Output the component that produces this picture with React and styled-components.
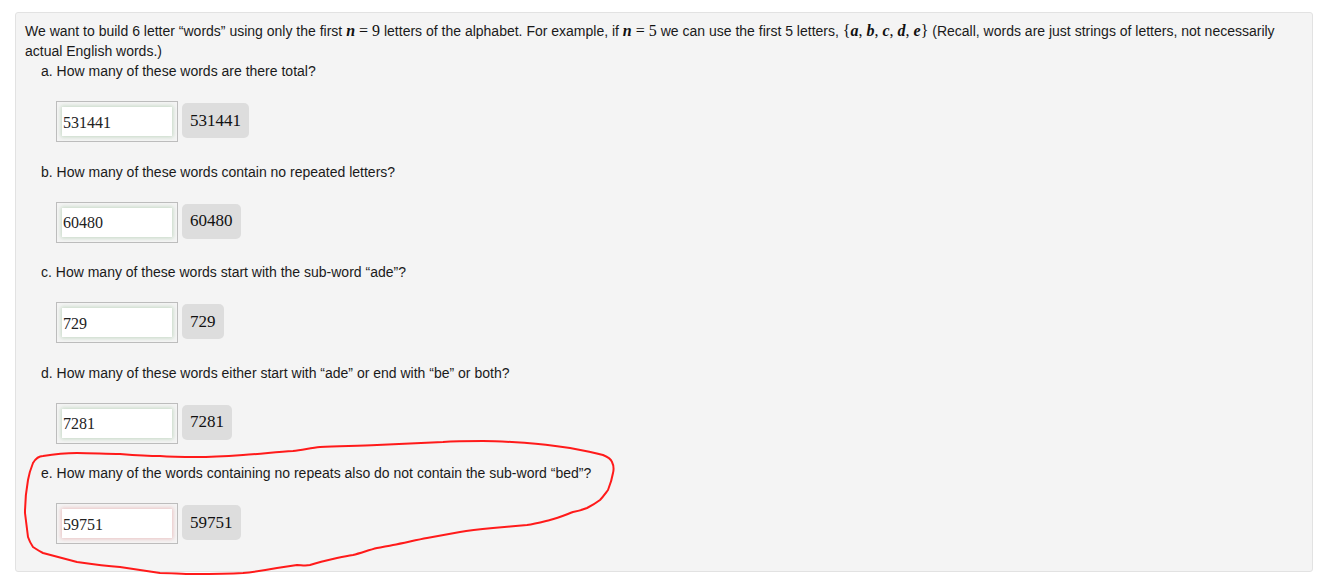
import React from "react";
import styled, { createGlobalStyle } from "styled-components";

const GlobalStyle = createGlobalStyle`
  html, body { margin: 0; padding: 0; background: #ffffff; }
  body { font-family: "Liberation Sans", Arial, sans-serif; }
`;

const Page = styled.div`
  position: relative;
  padding: 12px 11px 13px 15px;
`;

const Card = styled.div`
  background: #f4f4f4;
  border: 1px solid #e2e2e2;
  border-radius: 3px;
  padding: 8px 9px 7px 9px;
  font-family: "Liberation Sans", Arial, sans-serif;
  font-size: 14px;
  line-height: 20px;
  color: #1a1a1a;
`;

const Intro = styled.p`
  margin: 0;
`;

const MathVar = styled.span`
  font-family: "Liberation Serif", "Times New Roman", serif;
  font-style: italic;
  font-weight: bold;
  font-size: 16px;
  line-height: 1;
  color: #111;
`;

const MathText = styled.span`
  font-family: "Liberation Serif", "Times New Roman", serif;
  font-size: 16px;
  line-height: 1;
  color: #111;
  margin: 0 ${(p) => (p.$op ? "4px" : "0")};
`;

const Parts = styled.div`
  margin: 0;
`;

const Part = styled.div`
  padding-left: 16px;
`;

const Label = styled.div`
  line-height: 20px;
`;

const AnswerRow = styled.div`
  display: flex;
  align-items: flex-start;
  margin: 20px 0 19.5px 15px;
`;

const AnswerBox = styled.div`
  border: 1px solid #bdbdbd;
  padding: 5px;
  background: #f4f4f4;
`;

const AnswerInput = styled.input`
  display: block;
  box-sizing: border-box;
  width: 110px;
  height: 29px;
  border: none;
  outline: none;
  background: #ffffff;
  padding: 2px 1px 0 1px;
  font-family: "Liberation Serif", "Times New Roman", serif;
  font-size: 16px;
  color: #222;
  box-shadow: ${(p) =>
    p.$state === "wrong"
      ? "0 0 4px 1px rgba(214, 90, 90, 0.32)"
      : "0 0 4px 1px rgba(96, 160, 96, 0.32)"};
`;

const Preview = styled.div`
  margin: 2px 0 0 4px;
  height: 35px;
  box-sizing: border-box;
  padding: 0 8px;
  display: flex;
  align-items: center;
  background: #dddddd;
  border-radius: 5px;
  font-family: "Liberation Serif", "Times New Roman", serif;
  font-size: 17px;
  color: #111;
`;

const Annotation = styled.svg`
  position: absolute;
  left: 0;
  top: 0;
  width: 1324px;
  height: 585px;
  pointer-events: none;
  overflow: visible;
`;

const parts = [
  { key: "a", text: "How many of these words are there total?", value: "531441" },
  { key: "b", text: "How many of these words contain no repeated letters?", value: "60480" },
  { key: "c", text: "How many of these words start with the sub-word \u201cade\u201d?", value: "729" },
  {
    key: "d",
    text: "How many of these words either start with \u201cade\u201d or end with \u201cbe\u201d or both?",
    value: "7281",
  },
  {
    key: "e",
    text: "How many of the words containing no repeats also do not contain the sub-word \u201cbed\u201d?",
    value: "59751",
    state: "wrong",
  },
];

const loopPath =
  "M33,463 C36,458 40,456 43,456 C55,454 66,453 77,453 C92,453 106,454 120,454 C133,455 147,456 160,456 " +
  "C172,457 185,457 197,457 C212,457 228,456 243,455 C260,454 276,452 293,451 C302,450 311,448 320,447 " +
  "C339,446 358,446 377,445 C399,444 421,443 443,442 C456,441 470,441 483,441 C498,441 512,442 527,443 " +
  "C541,444 556,446 570,448 C581,450 592,452 603,455 C608,457 611,459 612,462 C614,466 614,469 613,473 " +
  "C612,479 610,485 608,490 C605,494 603,497 600,500 C596,503 591,506 587,508 C582,510 578,511 573,512 " +
  "C565,515 558,518 550,520 C542,522 535,524 527,525 C516,526 504,527 493,528 C482,529 471,530 460,532 " +
  "C449,534 438,536 427,538 C416,540 404,543 393,545 C388,546 382,547 377,548 C369,550 361,553 353,555 " +
  "C347,556 342,557 337,558 C328,560 319,562 310,565 C305,566 301,565 297,565 C290,566 284,567 277,568 " +
  "C266,570 254,572 243,573 C226,574 210,574 193,574 C182,574 171,573 160,573 C147,571 133,569 120,567 " +
  "C106,566 91,564 77,562 C66,559 54,556 43,553 C39,551 36,549 33,547 C31,544 29,540 28,537 " +
  "C27,529 26,521 25,513 C25,502 26,491 28,480 C29,474 31,468 33,463";

export default function App() {
  return (
    <>
      <GlobalStyle />
      <Page>
        <Card>
          <Intro>
            We want to build 6 letter {"\u201cwords\u201d"} using only the first{" "}
            <MathVar>n</MathVar>
            <MathText $op>=</MathText>
            <MathText>9</MathText> letters of the alphabet. For example, if{" "}
            <MathVar>n</MathVar>
            <MathText $op>=</MathText>
            <MathText>5</MathText> we can use the first 5 letters,{" "}
            <MathText>
              {"{"}
              <MathVar>a</MathVar>, <MathVar>b</MathVar>, <MathVar>c</MathVar>,{" "}
              <MathVar>d</MathVar>, <MathVar>e</MathVar>
              {"}"}
            </MathText>{" "}
            (Recall, words are just strings of letters, not necessarily
            <br />
            actual English words.)
          </Intro>
          <Parts>
            {parts.map((p) => (
              <Part key={p.key}>
                <Label>
                  {p.key}. {p.text}
                </Label>
                <AnswerRow>
                  <AnswerBox>
                    <AnswerInput defaultValue={p.value} $state={p.state} readOnly />
                  </AnswerBox>
                  <Preview>{p.value}</Preview>
                </AnswerRow>
              </Part>
            ))}
          </Parts>
        </Card>
        <Annotation viewBox="0 0 1324 585">
          <path
            d={loopPath}
            fill="none"
            stroke="#ff1a1a"
            strokeWidth="2"
            strokeLinecap="round"
            strokeLinejoin="round"
          />
        </Annotation>
      </Page>
    </>
  );
}
